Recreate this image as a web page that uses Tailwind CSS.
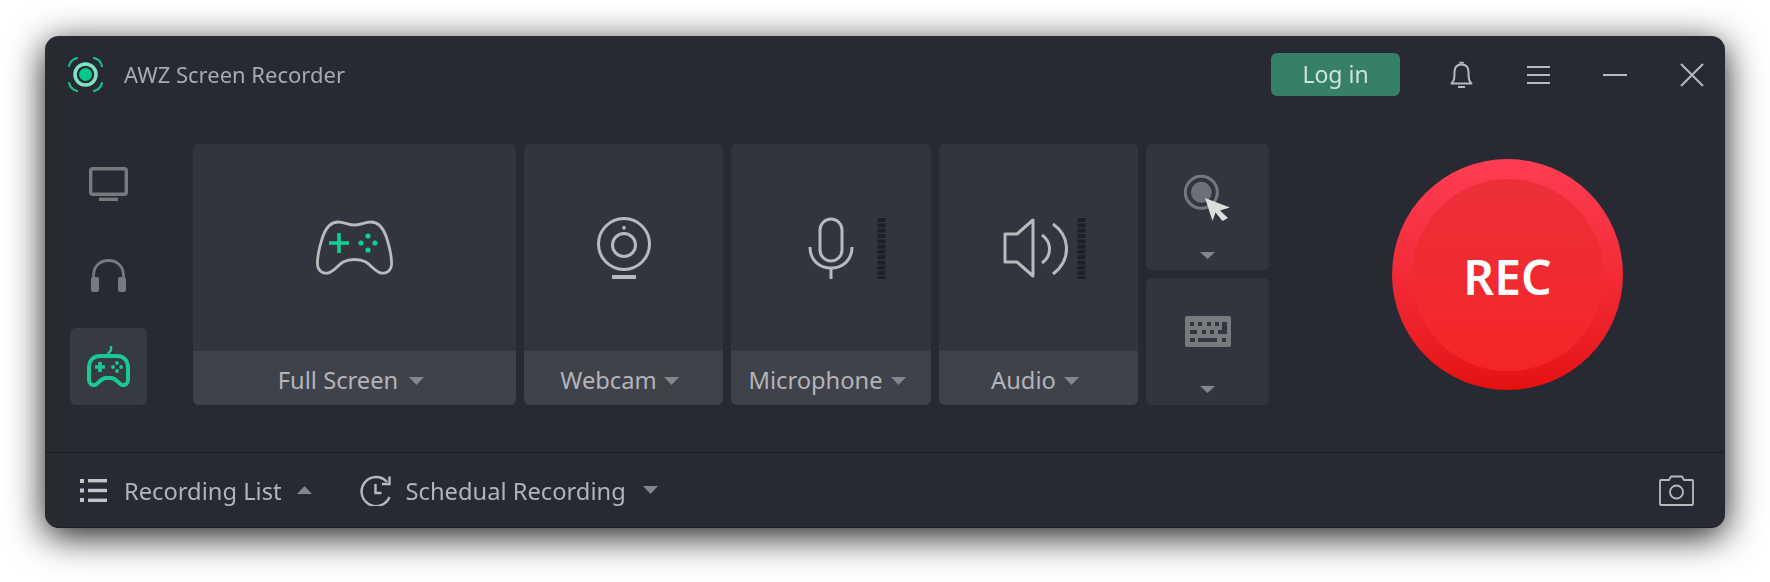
<!DOCTYPE html>
<html lang="en">
<head>
  <meta charset="UTF-8" />
  <title>AWZ Screen Recorder</title>
  <script src="https://cdn.jsdelivr.net/npm/@tailwindcss/browser@4"></script>
</head>
<body class="bg-white font-['Noto_Sans',sans-serif] overflow-hidden">
  <div class="pt-[36px] pl-[45px] h-[582px]">
    <!-- Window -->
    <div class="w-[1680px] h-[492px] flex flex-col bg-[#282a33] rounded-[14px] shadow-[0_8px_36px_rgba(0,0,0,0.9)] border-b border-[#1e1f25] blur-[0.4px]">

      <!-- Title bar -->
      <header class="h-[77px] shrink-0 flex items-center pl-[23px] pr-[21px]">
        <svg width="35" height="35" viewBox="0 0 35 35" fill="none">
          <circle cx="17.5" cy="17.5" r="10.5" stroke="#7fe3c4" stroke-width="3.5" />
          <circle cx="17.5" cy="17.5" r="6.5" fill="#00c98d" />
          <path d="M1 9 C2 5 5 2 9 1 M26 1 C30 2 33 5 34 9 M1 26 C2 30 5 33 9 34 M26 34 C30 33 33 30 34 26" stroke="#1cbc8e" stroke-width="2.2" stroke-linecap="round" />
        </svg>
        <span class="ml-[21px] text-[22px] text-[#a9aaae]">AWZ Screen Recorder</span>
        <button class="ml-auto w-[129px] h-[43px] rounded-[6px] bg-[#367f68] text-[#cfe3dc] text-[23px]">Log in</button>
        <svg class="ml-[50px]" width="23" height="27" viewBox="0 0 23 27" fill="none" stroke="#b9babc" stroke-width="2">
          <path d="M1.5 22.5 C4 20 4.5 18 4.5 11 C4.5 6 7.5 3.5 11.5 3.5 C15.5 3.5 18.5 6 18.5 11 C18.5 18 19 20 21.5 22.5 Z" stroke-linejoin="round" />
          <path d="M9.5 2.5 C10 1 13 1 13.5 2.5 M8 26 H15" />
        </svg>
        <svg class="ml-[54px]" width="23" height="18" viewBox="0 0 23 18" fill="none" stroke="#b9babc" stroke-width="2">
          <path d="M0 1 H23 M0 9 H23 M0 17 H23" />
        </svg>
        <svg class="ml-[53px]" width="24" height="2" viewBox="0 0 24 2" fill="none" stroke="#b9babc" stroke-width="2">
          <path d="M0 1 H24" />
        </svg>
        <svg class="ml-[53px]" width="24" height="24" viewBox="0 0 24 24" fill="none" stroke="#b9babc" stroke-width="2">
          <path d="M1 1 L23 23 M23 1 L1 23" />
        </svg>
      </header>

      <!-- Main area -->
      <main class="flex-1 flex items-start pt-[31px] pl-[25px]">
        <!-- Mode sidebar -->
        <nav class="w-[77px] flex flex-col gap-[15px]">
          <div class="h-[77px] flex items-center justify-center pt-[3px]">
            <svg width="39" height="34" viewBox="0 0 39 34" fill="none" stroke="#78797d" stroke-width="3.4">
              <rect x="1.7" y="1.7" width="35.6" height="25.6" rx="2" />
              <path d="M10 32.3 H29" />
            </svg>
          </div>
          <div class="h-[77px] flex items-center justify-center pt-[2px]">
            <svg width="35" height="33" viewBox="0 0 35 33" fill="none">
              <path d="M2.5 22 V17 C2.5 7 9 1.5 17.5 1.5 C26 1.5 32.5 7 32.5 17 V22" stroke="#78797d" stroke-width="2.8" />
              <rect x="0" y="18" width="8" height="15" rx="2" fill="#78797d" />
              <rect x="27" y="18" width="8" height="15" rx="2" fill="#78797d" />
            </svg>
          </div>
          <div class="h-[77px] rounded-[6px] bg-[#363a43] flex items-center justify-center">
            <svg width="43" height="41" viewBox="0 0 43 41" fill="none">
              <path d="M13 10 H30 C37 10 41 15 41 22 V34 C41 38 38 39.5 35 39 C32 38.5 30 33 25 32 H18 C13 33 11 38.5 8 39 C5 39.5 2 38 2 34 V22 C2 15 6 10 13 10 Z" stroke="#19c896" stroke-width="4" />
              <path d="M21.5 10 V7 L24 4.5 V0" stroke="#19c896" stroke-width="2.4" />
              <path d="M8 21 H18 M13 16 V26" stroke="#19c896" stroke-width="3.6" />
              <g fill="#19c896">
                <circle cx="30" cy="17" r="1.9" /><circle cx="30" cy="25" r="1.9" /><circle cx="26" cy="21" r="1.9" /><circle cx="34" cy="21" r="1.9" />
              </g>
            </svg>
          </div>
        </nav>

        <!-- Source cards -->
        <section class="ml-[46px] h-[261px] flex gap-[8px]">
          <div class="w-[323px] rounded-[6px] overflow-hidden flex flex-col bg-[#32353d]">
            <div class="flex-1 flex items-center justify-center">
              <svg width="77" height="55" viewBox="0 0 77 55" fill="none">
                <path d="M22 2 C28 2 33 5 38.5 5 C44 5 49 2 55 2 C63 2 67 8 70 16 C73 25 76 36 75.5 45 C75 51 70 54 65 53 C59 52 56 46 50 42 C46 40 42 39.5 38.5 39.5 C35 39.5 31 40 27 42 C21 46 18 52 12 53 C7 54 2 51 1.5 45 C1 36 4 25 7 16 C10 8 14 2 22 2 Z" stroke="#b9babc" stroke-width="2.8" />
                <path d="M13 23 H33 M23 13 V33" stroke="#10cf95" stroke-width="3.6" />
                <g fill="#10cf95">
                  <circle cx="52" cy="16" r="2.6" /><circle cx="52" cy="30" r="2.6" /><circle cx="45" cy="23" r="2.6" /><circle cx="59" cy="23" r="2.6" />
                </g>
              </svg>
            </div>
            <div class="h-[54px] pt-[5px] pr-[7px] flex items-center justify-center gap-[11px] bg-[#3f424b] text-[23.7px] text-[#b3b4b7]">
              <span>Full Screen</span>
              <svg width="15" height="8" viewBox="0 0 15 8"><path d="M0 0 H15 L7.5 8 Z" fill="#85868a" /></svg>
            </div>
          </div>

          <div class="w-[199px] rounded-[6px] overflow-hidden flex flex-col bg-[#32353d]">
            <div class="flex-1 flex items-center justify-center">
              <svg width="56" height="62" viewBox="0 0 56 62" fill="none" stroke="#b9babc" stroke-width="3">
                <circle cx="28" cy="27" r="25.5" />
                <circle cx="28" cy="28" r="11.5" />
                <path d="M28 9 V12.5" />
                <path d="M16 60 H40" stroke-width="4" />
              </svg>
            </div>
            <div class="h-[54px] pt-[5px] pr-[8px] flex items-center justify-center gap-[7px] bg-[#3f424b] text-[23.7px] text-[#b3b4b7]">
              <span>Webcam</span>
              <svg width="15" height="8" viewBox="0 0 15 8"><path d="M0 0 H15 L7.5 8 Z" fill="#85868a" /></svg>
            </div>
          </div>

          <div class="w-[200px] rounded-[6px] overflow-hidden flex flex-col bg-[#32353d]">
            <div class="flex-1 flex items-center justify-center">
              <svg width="112" height="62" viewBox="0 0 112 62" fill="none">
                <g stroke="#b9babc" stroke-width="3">
                  <rect x="45" y="2" width="22" height="42" rx="11" />
                  <path d="M35 30 C35 43 44 51 56 51 C68 51 77 43 77 30 M56 51 V62" />
                </g>
                <path d="M106.5 1 V62" stroke="#1f2026" stroke-width="8" stroke-dasharray="4 1.3" />
              </svg>
            </div>
            <div class="h-[54px] pt-[5px] pr-[8px] flex items-center justify-center gap-[8px] bg-[#3f424b] text-[23.7px] text-[#b3b4b7]">
              <span>Microphone</span>
              <svg width="15" height="8" viewBox="0 0 15 8"><path d="M0 0 H15 L7.5 8 Z" fill="#85868a" /></svg>
            </div>
          </div>

          <div class="w-[199px] rounded-[6px] overflow-hidden flex flex-col bg-[#32353d]">
            <div class="flex-1 flex items-center justify-center">
              <svg width="112" height="62" viewBox="0 0 112 62" fill="none">
                <g stroke="#b9babc" stroke-width="3">
                  <path d="M22 17 H34 L50 3 V59 L34 45 H22 Z" stroke-linejoin="round" />
                  <path d="M59 18 C69 25 69 39 59 46" />
                  <path d="M70 7 C88 20 88 43 70 57" />
                </g>
                <path d="M98.5 1 V62" stroke="#1f2026" stroke-width="8" stroke-dasharray="4 1.3" />
              </svg>
            </div>
            <div class="h-[54px] pt-[5px] pr-[7px] flex items-center justify-center gap-[8px] bg-[#3f424b] text-[23.7px] text-[#b3b4b7]">
              <span>Audio</span>
              <svg width="15" height="8" viewBox="0 0 15 8"><path d="M0 0 H15 L7.5 8 Z" fill="#85868a" /></svg>
            </div>
          </div>

          <div class="w-[123px] flex flex-col gap-[8px]">
            <div class="h-[126px] rounded-[6px] bg-[#32353d] flex flex-col items-center pt-[30px] pb-[11px]">
              <svg width="47" height="47" viewBox="0 0 47 47" fill="none">
                <circle cx="17.3" cy="18.3" r="16" stroke="#75777b" stroke-width="3" />
                <circle cx="17.3" cy="18.3" r="10.5" fill="#6d7075" />
                <path d="M21 24 L46 33.5 L36 36.5 L44 44 L38.5 47 L31.5 38.5 L28.5 47 Z" fill="#dcdddd" />
              </svg>
              <svg class="mt-auto" width="15" height="7" viewBox="0 0 15 7"><path d="M0 0 H15 L7.5 7 Z" fill="#85868a" /></svg>
            </div>
            <div class="h-[127px] rounded-[6px] bg-[#32353d] flex flex-col items-center pt-[38px] pb-[12px]">
              <svg width="46" height="31" viewBox="0 0 46 31">
                <path fill-rule="evenodd" fill="#787a7d" d="M2 0 H44 Q46 0 46 2 V29 Q46 31 44 31 H2 Q0 31 0 29 V2 Q0 0 2 0 Z M5 6 V10 H9 V6 Z M13 6 V10 H17 V6 Z M22 6 V10 H26 V6 Z M30 6 V10 H34 V6 Z M37 6 V14 H33 V18 H42 V6 Z M5 14 V18 H12 V14 Z M17 14 V18 H21 V14 Z M25 14 V18 H29 V14 Z M5 22 V26 H10 V22 Z M13 22 V26 H32 V22 Z M37 22 V26 H41 V22 Z" />
              </svg>
              <svg class="mt-auto" width="15" height="7" viewBox="0 0 15 7"><path d="M0 0 H15 L7.5 7 Z" fill="#85868a" /></svg>
            </div>
          </div>
        </section>

        <!-- Record button -->
        <button class="ml-[123px] mt-[15px] w-[231px] h-[231px] rounded-full bg-gradient-to-b from-[#ff3d52] to-[#e5100f] flex items-center justify-center">
          <span class="w-[192px] h-[192px] pt-[4px] rounded-full bg-gradient-to-b from-[#ec2f3a] to-[#f42525] flex items-center justify-center text-white text-[48px] font-semibold">REC</span>
        </button>
      </main>

      <!-- Bottom bar -->
      <footer class="h-[75px] shrink-0 flex items-center border-t border-[#1c1d22] pl-[35px] pr-[31px] text-[23.7px] text-[#b3b4b7]">
        <svg width="27" height="23" viewBox="0 0 27 23" fill="#c4c5c7">
          <rect x="0" y="0" width="4" height="4" /><rect x="8" y="0" width="19" height="3.4" />
          <rect x="0" y="9.5" width="4" height="4" /><rect x="8" y="9.8" width="19" height="3.4" />
          <rect x="0" y="19" width="4" height="4" /><rect x="8" y="19.6" width="19" height="3.4" />
        </svg>
        <span class="ml-[17px] pt-[4px]">Recording List</span>
        <svg class="ml-[15px]" width="15" height="8" viewBox="0 0 15 8"><path d="M0 8 H15 L7.5 0 Z" fill="#85868a" /></svg>
        <svg class="ml-[48px]" width="31" height="31" viewBox="0 0 31 31" fill="none" stroke="#b9babc" stroke-width="2.4">
          <path d="M29.5 22 A14.5 14.5 0 1 1 27 7" />
          <path d="M29.5 1.5 V9 H22" />
          <path d="M15.5 9 V18 H21.5" />
        </svg>
        <span class="ml-[15px] pt-[4px]">Schedual Recording</span>
        <svg class="ml-[17px]" width="15" height="8" viewBox="0 0 15 8"><path d="M0 0 H15 L7.5 8 Z" fill="#85868a" /></svg>
        <svg class="ml-auto" width="35" height="31" viewBox="0 0 35 31" fill="none" stroke="#b9babc" stroke-width="1.8">
          <path d="M2 5 H10 L12 1.5 H23 L25 5 H33 Q34 5 34 6 V29 Q34 30 33 30 H2 Q1 30 1 29 V6 Q1 5 2 5 Z" stroke-linejoin="round" />
          <circle cx="17.5" cy="17" r="6.5" />
        </svg>
      </footer>
    </div>
  </div>
</body>
</html>
